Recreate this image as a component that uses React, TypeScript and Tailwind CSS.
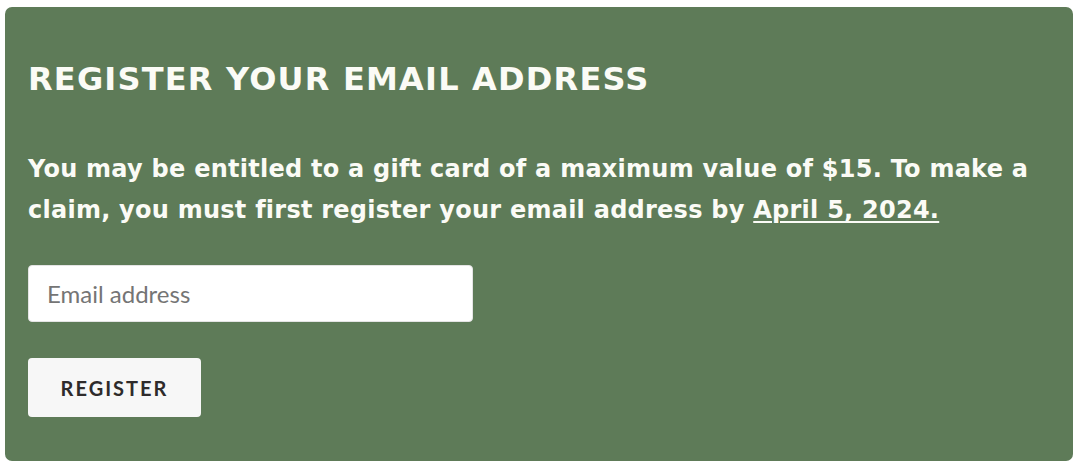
export default function App() {
  return (
    <div className="w-[1080px] h-[469px] bg-white pt-[7px] pl-[5px]">
      <section className="w-[1068px] h-[454px] rounded-[7px] bg-[#5e7b58] pl-[23px] pt-[52px] font-['DejaVu_Sans',sans-serif] text-[#fbfbf6]">
        <h2 className="text-[32px] leading-[40px] font-bold tracking-[1.2px]">REGISTER YOUR EMAIL ADDRESS</h2>
        <p className="mt-[50px] w-[1030px] text-[24px] leading-[41px] font-bold tracking-[0.25px]">
          You may be entitled to a gift card of a maximum value of $15. To make a claim, you must first register your email address by{" "}
          <a href="#" className="underline underline-offset-[3px] decoration-2">April 5, 2024.</a>
        </p>
        <form className="mt-[34px] flex flex-col items-start gap-[36px]" onSubmit={(e) => e.preventDefault()}>
          <input
            type="email"
            placeholder="Email address"
            className="w-[445px] h-[57px] rounded-[4px] bg-white border border-[#e4e4e4] px-[18px] font-['Lato',sans-serif] text-[24px] text-[#333] placeholder:text-[#757575] outline-none"
          />
          <button
            type="submit"
            className="w-[173px] h-[59px] rounded-[4px] bg-[#f7f7f7] font-['Lato',sans-serif] font-bold text-[20px] tracking-[2px] text-[#2e2b2b]"
          >
            REGISTER
          </button>
        </form>
      </section>
    </div>
  );
}
